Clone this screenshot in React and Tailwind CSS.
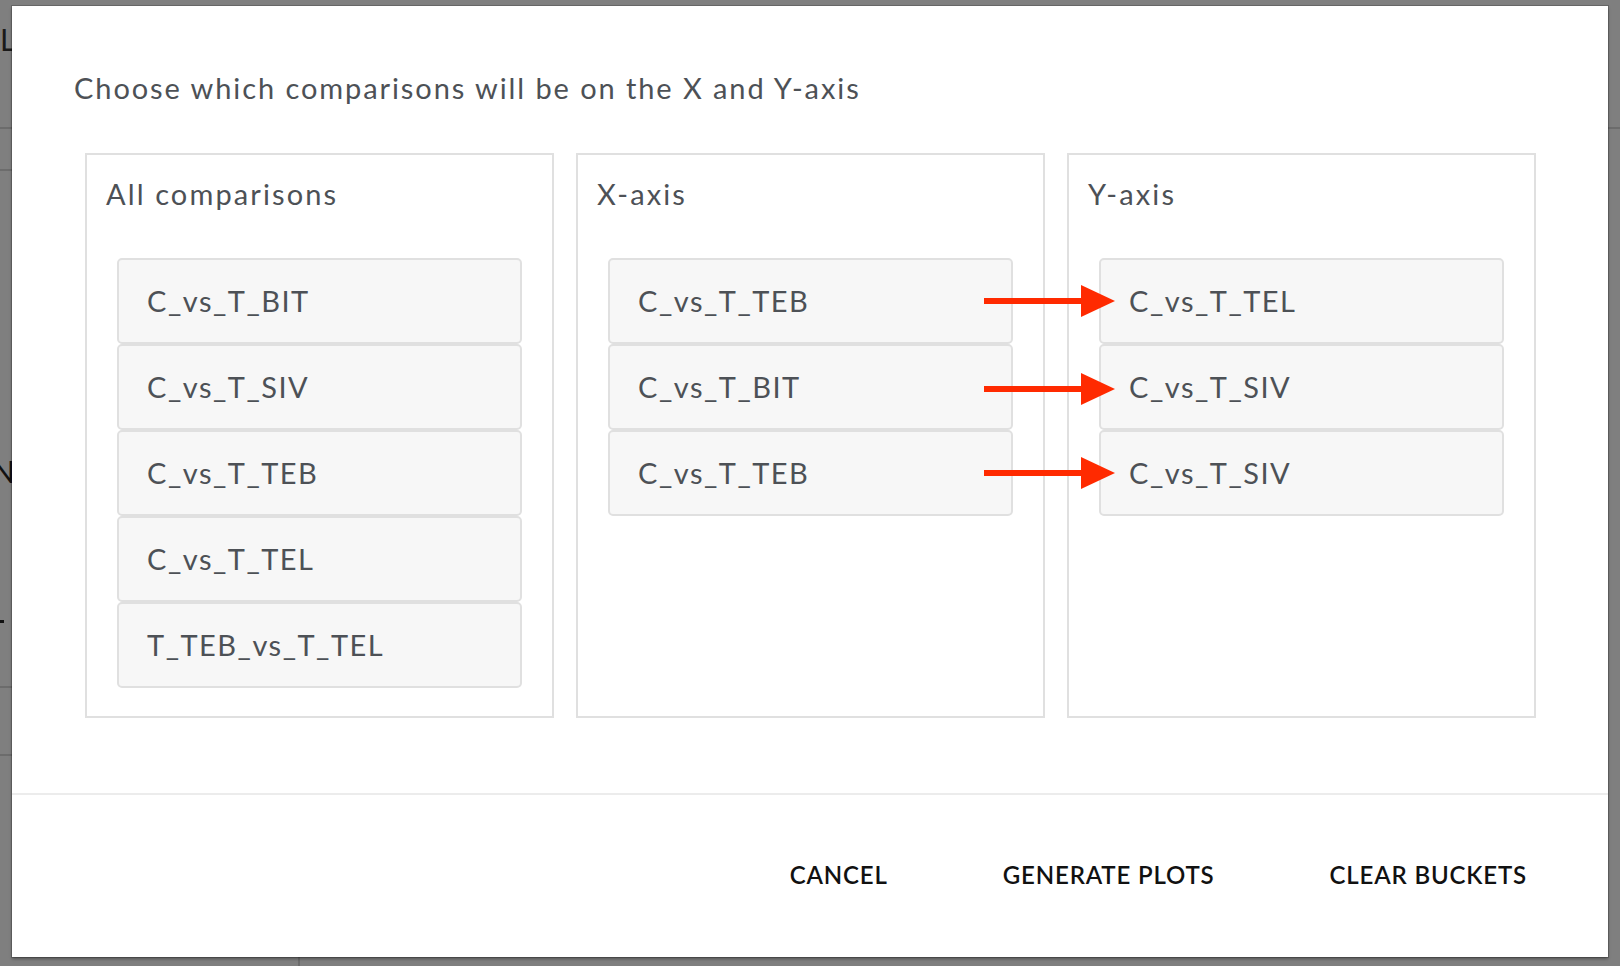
import React from "react";

const cols = [
  { title: "All comparisons", items: ["C_vs_T_BIT", "C_vs_T_SIV", "C_vs_T_TEB", "C_vs_T_TEL", "T_TEB_vs_T_TEL"] },
  { title: "X-axis", items: ["C_vs_T_TEB", "C_vs_T_BIT", "C_vs_T_TEB"] },
  { title: "Y-axis", items: ["C_vs_T_TEL", "C_vs_T_SIV", "C_vs_T_SIV"] },
];

function Arrow() {
  return (
    <svg width="132" height="34" viewBox="0 0 132 34" className="block">
      <rect x="0" y="14" width="100" height="6" fill="#ff2a00" />
      <polygon points="97,1 131,17 97,33" fill="#ff2a00" />
    </svg>
  );
}

export default function App() {
  const font = { fontFamily: "Lato, 'Noto Sans', sans-serif" };
  return (
    <div className="relative w-[1620px] h-[966px] overflow-hidden bg-[#7f7f7f]" style={font}>
      {/* underlying page, dimmed */}
      <div className="absolute left-0 top-[24px] text-[30px] text-[#1a1a1a] leading-none">L0</div>
      <div className="absolute left-0 top-[127px] w-[20px] h-[2px] bg-[#6c6c6c]" />
      <div className="absolute left-0 top-[169px] w-[20px] h-[2px] bg-[#6c6c6c]" />
      <div className="absolute left-[-8px] top-[456px] text-[30px] text-[#111] leading-none">N</div>
      <div className="absolute left-0 top-[620px] w-[4px] h-[3px] bg-[#111]" />
      <div className="absolute left-0 top-[686px] w-[20px] h-[2px] bg-[#6c6c6c]" />
      <div className="absolute left-0 top-[754px] w-[20px] h-[2px] bg-[#6c6c6c]" />
      <div className="absolute right-0 top-[127px] w-[20px] h-[2px] bg-[#6c6c6c]" />
      <div className="absolute left-[298px] top-[940px] w-[2px] h-[30px] bg-[#6c6c6c]" />

      {/* dialog */}
      <div className="absolute left-[12px] top-[6px] w-[1596px] h-[951px] bg-white flex flex-col shadow-[0_0_0_1px_rgba(0,0,0,0.18),0_2px_3px_rgba(0,0,0,0.35)]">
        <div className="pl-[62px] pt-[65px] text-[29px] leading-[34px] tracking-[0.066em] text-[#4d5156]">
          Choose which comparisons will be on the X and Y-axis
        </div>
        <div className="relative flex gap-[22px] pl-[73px] mt-[48px]">
          {cols.map((c) => (
            <div key={c.title} className="w-[469px] h-[565px] border-2 border-[#e0e0e0] flex flex-col">
              <div className="ml-[19px] mt-[22px] text-[29px] leading-[34px] tracking-[0.073em] text-[#4d5156]">{c.title}</div>
              <div className="mx-[30px] mt-[47px] flex flex-col">
                {c.items.map((it, i) => (
                  <div
                    key={i}
                    className="h-[86px] border-2 border-[#e0e0e0] rounded-[5px] bg-[#f7f7f7] flex items-center pl-[28px] text-[29px] tracking-[0.052em] text-[#4d5156]"
                  >
                    {it}
                  </div>
                ))}
              </div>
            </div>
          ))}
          {/* annotation arrows */}
          <div className="absolute left-[972px] top-[131px] flex flex-col gap-[52px]">
            <Arrow />
            <div className="mt-[2px]"><Arrow /></div>
            <div className="-mt-[2px]"><Arrow /></div>
          </div>
        </div>
        <div className="mt-[75px] h-[2px] bg-[#ececec]" />
        <div className="flex-1 flex items-center justify-end gap-[115px] pr-[81px] pb-[2px]">
          {["CANCEL", "GENERATE PLOTS", "CLEAR BUCKETS"].map((b) => (
            <button key={b} className="text-[24px] font-semibold text-[#111] tracking-[0.035em] leading-none">
              {b}
            </button>
          ))}
        </div>
      </div>
    </div>
  );
}
